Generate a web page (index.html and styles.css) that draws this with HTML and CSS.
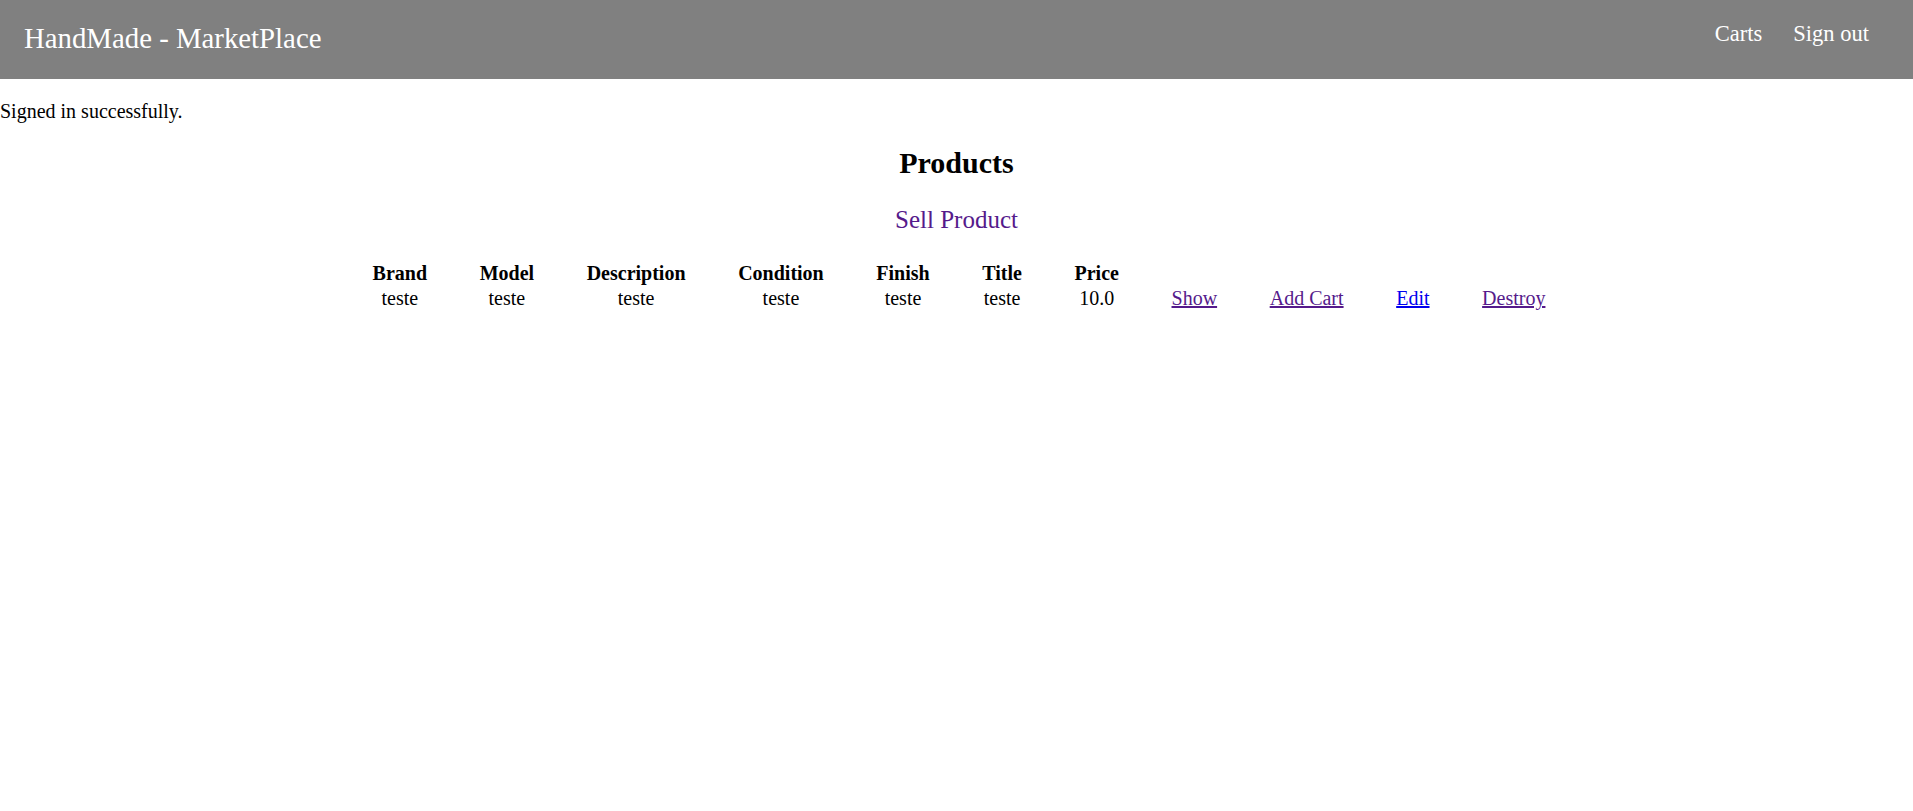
FILE: index.html
```html
<!DOCTYPE html>
<html>
<head>
<meta charset="utf-8">
<link rel="stylesheet" href="styles.css">
</head>
<body>
<header class="topbar">
  <div class="brand">HandMade - MarketPlace</div>
  <nav class="nav">
    <a href="#">Carts</a>
    <a href="#">Sign out</a>
  </nav>
</header>
<p class="notice">Signed in successfully.</p>
<main class="content">
  <h2 class="title">Products</h2>
  <a class="sell visited" href="#">Sell Product</a>
  <table class="products">
    <thead>
      <tr>
        <th>Brand</th><th>Model</th><th>Description</th><th>Condition</th><th>Finish</th><th>Title</th><th>Price</th><th></th><th></th><th></th><th></th>
      </tr>
    </thead>
    <tbody>
      <tr>
        <td>teste</td><td>teste</td><td>teste</td><td>teste</td><td>teste</td><td>teste</td><td>10.0</td>
        <td><a class="visited" href="#">Show</a></td>
        <td><a class="visited" href="#">Add Cart</a></td>
        <td><a class="fresh" href="#">Edit</a></td>
        <td><a class="visited" href="#">Destroy</a></td>
      </tr>
    </tbody>
  </table>
</main>
</body>
</html>
```

FILE: styles.css
```css
html, body {
  margin: 0;
  padding: 0;
  background: #ffffff;
  font-family: "Liberation Serif", "Times New Roman", serif;
  color: #000000;
}

.topbar {
  height: 79px;
  background: #808080;
  display: flex;
  align-items: center;
  justify-content: space-between;
  padding: 0 44px 0 24px;
  box-sizing: border-box;
  color: #ffffff;
}

.brand {
  font-size: 28.8px;
  line-height: 33px;
  margin-top: -3px;
}

.nav {
  display: flex;
  gap: 31px;
  margin-top: -12px;
}

.nav a {
  color: #ffffff;
  text-decoration: none;
  font-size: 22.5px;
  line-height: 26px;
}

.notice {
  margin: 21px 0 0 0;
  font-size: 20px;
  line-height: 22px;
}

.content {
  display: flex;
  flex-direction: column;
  align-items: center;
}

.title {
  margin: 24px 0 0 0;
  font-size: 30px;
  line-height: 33px;
  font-weight: bold;
}

.sell {
  margin-top: 27px;
  font-size: 25px;
  line-height: 28px;
  text-decoration: none;
}

a.visited {
  color: #551a8b;
}

a.fresh {
  color: #0000ee;
}

.products {
  margin-top: 26px;
  margin-left: 5px;
  border-collapse: separate;
  border-spacing: 3px 2px;
  font-size: 20px;
}

.products th,
.products td {
  padding: 0 24.8px;
  line-height: 23px;
  text-align: center;
}

.products th {
  font-weight: bold;
}

.products td a {
  text-decoration: underline;
}
```
